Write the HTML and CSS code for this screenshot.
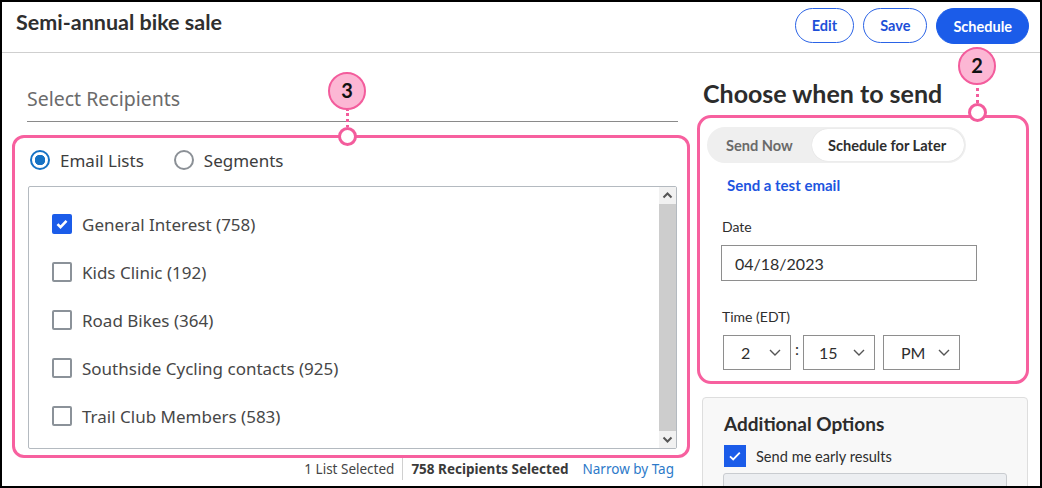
FILE: index.html
```html
<!DOCTYPE html>
<html lang="en">
<head>
    <meta charset="UTF-8">
    <title>Semi-annual bike sale</title>
    <link rel="stylesheet" href="styles.css">
</head>
<body>

<div class="frame">
  <header class="topbar">
    <h1 class="title">Semi-annual bike sale</h1>
    <div class="actions">
      <button class="btn btn-outline">Edit</button>
      <button class="btn btn-outline">Save</button>
      <button class="btn btn-primary">Schedule</button>
    </div>
  </header>

  <div class="main">
    <section class="recipients">
      <h2 class="recip-title">Select Recipients</h2>
      <div class="hl-box hl-left">
        <div class="radio-row">
          <label class="radio"><span class="radio-dot checked"></span>Email Lists</label>
          <label class="radio"><span class="radio-dot"></span>Segments</label>
        </div>
        <div class="list-box">
          <ul class="lists">
            <li><span class="check checked"><svg viewBox="0 0 20 20" width="20" height="20"><path d="M5.5 10.2l3 3 6-6.4" fill="none" stroke="#fff" stroke-width="2.6"/></svg></span>General Interest (758)</li>
            <li><span class="check"></span>Kids Clinic (192)</li>
            <li><span class="check"></span>Road Bikes (364)</li>
            <li><span class="check"></span>Southside Cycling contacts (925)</li>
            <li><span class="check"></span>Trail Club Members (583)</li>
          </ul>
          <div class="scrollbar">
            <div class="sb-btn"><svg viewBox="0 0 17 17" width="17" height="17"><path d="M4.5 10.5l4-4 4 4" fill="none" stroke="#555" stroke-width="2"/></svg></div>
            <div class="sb-thumb"></div>
            <div class="sb-btn"><svg viewBox="0 0 17 17" width="17" height="17"><path d="M4.5 6.5l4 4 4-4" fill="none" stroke="#555" stroke-width="2"/></svg></div>
          </div>
        </div>
      </div>
      <div class="recip-footer">
        <span>1 List Selected</span>
        <span class="sep"></span>
        <strong>758 Recipients Selected</strong>
        <a class="tag-link">Narrow by Tag</a>
      </div>
    </section>

    <section class="when">
      <h2 class="when-title">Choose when to send</h2>
      <div class="hl-box hl-right">
        <div class="tabs">
          <span class="tab">Send Now</span>
          <span class="tab active">Schedule for Later</span>
        </div>
        <a class="test-link">Send a test email</a>
        <div class="field-label">Date</div>
        <div class="date-input">04/18/2023</div>
        <div class="field-label time-label">Time (EDT)</div>
        <div class="time-row">
          <div class="select sel-hour">2<svg viewBox="0 0 12 7" width="12" height="7"><path d="M1 1l5 5 5-5" fill="none" stroke="#555" stroke-width="1.4"/></svg></div>
          <span class="colon">:</span>
          <div class="select sel-min">15<svg viewBox="0 0 12 7" width="12" height="7"><path d="M1 1l5 5 5-5" fill="none" stroke="#555" stroke-width="1.4"/></svg></div>
          <div class="select sel-ampm">PM<svg viewBox="0 0 12 7" width="12" height="7"><path d="M1 1l5 5 5-5" fill="none" stroke="#555" stroke-width="1.4"/></svg></div>
        </div>
      </div>
      <div class="options">
        <h3 class="options-title">Additional Options</h3>
        <label class="opt-row"><span class="opt-check"><svg viewBox="0 0 22 22" width="22" height="22"><path d="M6 11.3l3.2 3.2 6.6-6.8" fill="none" stroke="#fff" stroke-width="1.8"/></svg></span>Send me early results</label>
        <div class="opt-box"></div>
      </div>
    </section>
  </div>

  <div class="callout callout-3">
    <div class="badge">3</div>
    <div class="stem"></div>
    <div class="ring"></div>
  </div>
  <div class="callout callout-2">
    <div class="badge">2</div>
    <div class="stem"></div>
    <div class="ring"></div>
  </div>
</div>

</body>
</html>
```

FILE: styles.css
```css
* { box-sizing: border-box; }

body {
  margin: 0;
  font-family: Lato, "Noto Sans", Arial, sans-serif;
  color: #333;
}

.frame {
  position: relative;
  width: 1042px;
  height: 488px;
  border: 2px solid #000;
  overflow: hidden;
  background: #fff;
}

/* header */
.topbar {
  display: flex;
  justify-content: space-between;
  align-items: flex-start;
  height: 51px;
  padding: 6px 11px 0 14px;
  border-bottom: 1px solid #cfcfcf;
}

.title {
  margin: 0;
  font-size: 21.5px;
  line-height: 28px;
  font-weight: 700;
  color: #2f2f2f;
}

.actions {
  display: flex;
  gap: 9px;
}

.btn {
  height: 35px;
  padding: 0 16px;
  border-radius: 18px;
  font-family: Lato, Arial, sans-serif;
  font-size: 14.5px;
  font-weight: 700;
  cursor: pointer;
}

.btn-outline {
  background: #fff;
  border: 1px solid #2a63e6;
  color: #1d4fd8;
}

.btn-primary {
  background: #1b5ce9;
  border: 1px solid #1b5ce9;
  color: #fff;
  height: 36px;
  padding: 0 16px;
}

/* layout */
.main {
  display: flex;
  gap: 7px;
  padding-left: 10px;
}

.recipients { width: 678px; }
.when { width: 332px; }

.hl-box {
  border: 3px solid #f7609f;
  background: #fff;
}

/* recipients */
.recip-title {
  display: flex;
  align-items: flex-end;
  height: 69px;
  margin: 0 12px 0 15px;
  padding-bottom: 9px;
  border-bottom: 1px solid #8a8a8a;
  font-family: "Noto Sans", "Open Sans", Arial, sans-serif;
  font-size: 19.5px;
  font-weight: 400;
  line-height: 26px;
  color: #6b6b6b;
}

.hl-left {
  margin-top: 13px;
  border-radius: 12px;
  padding: 0 10px 6px 13px;
}

.radio-row {
  display: flex;
  align-items: center;
  height: 44px;
  margin-bottom: 4px;
  gap: 30px;
  padding-left: 2px;
  font-family: "Noto Sans", "Open Sans", Arial, sans-serif;
  font-size: 17px;
  color: #3d3d3d;
}

.radio {
  display: flex;
  align-items: center;
  gap: 10px;
}

.radio-dot {
  width: 20px;
  height: 20px;
  border-radius: 50%;
  border: 2px solid #8b9096;
  background: #fff;
}

.radio-dot.checked {
  border-color: #1672c4;
  background: radial-gradient(circle, #1672c4 0 5px, #fff 5.5px);
}

.list-box {
  display: flex;
  height: 263px;
  border: 1px solid #b4bac0;
  border-radius: 2px;
}

.lists {
  flex: 1;
  list-style: none;
  margin: 0;
  padding: 13px 0 0 23px;
  font-family: "Noto Sans", "Open Sans", Arial, sans-serif;
  font-size: 17px;
  color: #474747;
}

.lists li {
  display: flex;
  align-items: center;
  height: 48px;
}

.check {
  width: 20px;
  height: 20px;
  margin-right: 10px;
  border: 2px solid #8b9299;
  border-radius: 2px;
}

.check.checked {
  border: none;
  background: #1b5ce9;
}

.check svg { display: block; }

.scrollbar {
  display: flex;
  flex-direction: column;
  width: 17px;
  background: #f1f1f1;
}

.sb-btn { height: 17px; }
.sb-btn svg { display: block; }

.sb-thumb {
  flex: 1;
  background: #cdcdcd;
}

.recip-footer {
  display: flex;
  justify-content: flex-end;
  align-items: center;
  height: 22px;
  padding-right: 16px;
  font-family: "Noto Sans", "Open Sans", Arial, sans-serif;
  font-size: 13.5px;
  color: #444;
}

.sep {
  width: 1px;
  height: 22px;
  margin: 0 8px;
  background: #d0d0d0;
}

.recip-footer strong {
  color: #3a3a3a;
}

.tag-link {
  margin-left: 14px;
  color: #2d7ac9;
}

/* when to send */
.when-title {
  margin: 0;
  padding: 28px 0 0 6px;
  margin-bottom: 10px;
  font-size: 25px;
  line-height: 24px;
  font-weight: 700;
  color: #2c2c2c;
}

.hl-right {
  height: 269px;
  border-radius: 14px;
  padding: 9px 10px 0 7px;
}

.tabs {
  display: inline-flex;
  align-items: center;
  height: 36px;
  padding: 2px;
  border-radius: 18px;
  background: #efefef;
  font-size: 14.6px;
  font-weight: 700;
}

.tab {
  width: 103px;
  padding-left: 17px;
  color: #6a6a6a;
}

.tab.active {
  display: flex;
  align-items: center;
  width: 152px;
  height: 32px;
  padding-left: 16px;
  border-radius: 16px;
  background: #fff;
  color: #2e2e2e;
  box-shadow: 0 0 1px rgba(0,0,0,0.15);
}

.test-link {
  display: block;
  margin: 12px 0 0 20px;
  line-height: 20px;
  font-size: 15px;
  font-weight: 700;
  color: #1d55e0;
}

.field-label {
  margin: 22px 0 0 15px;
  line-height: 20px;
  font-size: 14px;
  color: #2e2e2e;
}

.time-label { margin-top: 26px; }

.date-input {
  display: flex;
  align-items: center;
  width: 256px;
  height: 36px;
  margin: 8px 0 0 14px;
  padding-left: 13px;
  border: 1px solid #8e8e8e;
  font-size: 16px;
  color: #2e2e2e;
}

.time-row {
  display: flex;
  align-items: center;
  margin: 8px 0 0 16px;
  font-size: 16px;
  color: #2e2e2e;
}

.select {
  display: flex;
  align-items: center;
  justify-content: space-between;
  height: 35px;
  border: 1px solid #8e8e8e;
}

.select svg { display: block; }

.sel-hour { width: 68px; padding: 0 9px 0 17px; }
.sel-min { width: 72px; padding: 0 9px 0 15px; margin-right: 8px; }
.sel-ampm { width: 77px; padding: 0 9px 0 17px; }

.colon {
  width: 12px;
  text-align: center;
  margin-top: -8px;
}

/* additional options */
.options {
  margin: 13px 0 0 5px;
  width: 326px;
  height: 120px;
  padding: 14px 0 0 21px;
  background: #f8f8f8;
  border: 1px solid #dedede;
  border-radius: 4px;
}

.options-title {
  margin: 0;
  font-size: 19px;
  line-height: 24px;
  font-weight: 700;
  color: #2c2c2c;
}

.opt-row {
  display: flex;
  align-items: center;
  gap: 10px;
  margin-top: 9px;
  font-size: 14.6px;
  color: #2e2e2e;
}

.opt-check {
  width: 22px;
  height: 22px;
  background: #1b5ce9;
}

.opt-check svg { display: block; }

.opt-box {
  width: 284px;
  height: 40px;
  margin: 6px 0 0 -1px;
  background: #eceef1;
  border: 1px solid #c9ccd0;
  border-radius: 3px;
}

/* annotation callouts */
.callout {
  position: absolute;
  display: flex;
  flex-direction: column;
  align-items: center;
  width: 38px;
}

.callout-3 { left: 326px; top: 70px; }
.callout-2 { left: 956px; top: 45px; }

.badge {
  width: 38px;
  height: 38px;
  border-radius: 50%;
  border: 2.5px solid #f35c9c;
  background: #fcb7d4;
  color: #111;
  font-family: Lato, Arial, sans-serif;
  font-size: 20px;
  font-weight: 700;
  line-height: 33px;
  text-align: center;
}

.stem {
  width: 3px;
  height: 17px;
  background: repeating-linear-gradient(#f35c9c 0 3px, transparent 3px 6px);
  background-position: 0 3px;
}

.callout-2 .stem { height: 18px; }

.ring {
  width: 19px;
  height: 19px;
  border-radius: 50%;
  border: 3px solid #f35c9c;
  background: #fff;
}
```
